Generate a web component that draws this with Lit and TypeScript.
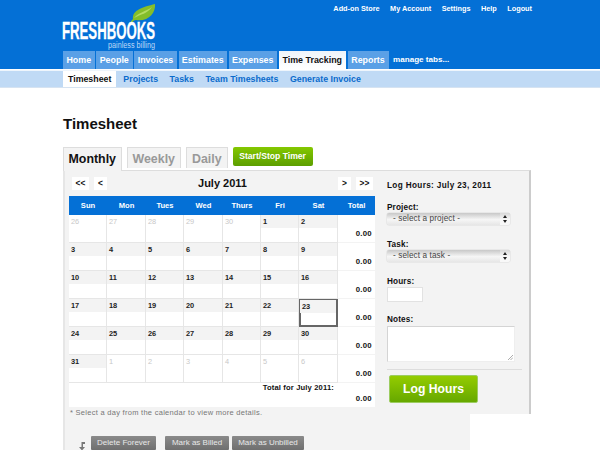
import { LitElement, html, css, svg } from "lit";
import { customElement } from "lit/decorators.js";

const cols = ["Sun", "Mon", "Tues", "Wed", "Thurs", "Fri", "Sat"];
const navTabs: [string, number, boolean][] = [
  ["Home", 31.5, false],
  ["People", 36.5, false],
  ["Invoices", 43, false],
  ["Estimates", 48.5, false],
  ["Expenses", 48.5, false],
  ["Time Tracking", 67.5, true],
  ["Reports", 41, false],
];
type Day = { n: number; cur: boolean; sel?: boolean };
const weeks: Day[][] = [];
{
  const all: Day[] = [];
  for (const n of [26, 27, 28, 29, 30]) all.push({ n, cur: false });
  for (let n = 1; n <= 31; n++) all.push({ n, cur: true, sel: n === 23 });
  for (const n of [1, 2, 3, 4, 5, 6]) all.push({ n, cur: false });
  for (let i = 0; i < 6; i++) weeks.push(all.slice(i * 7, i * 7 + 7));
}

@customElement("app-root")
export class AppRoot extends LitElement {
  static styles = css`
    :host { display: block; width: 600px; height: 450px; overflow: hidden; background: #fff;
      font-family: "Liberation Sans", Arial, sans-serif; color: #111; }
    .header { height: 69px; background: #0470d6; padding-left: 63px; display: flex; flex-direction: column; box-sizing: border-box; position: relative; }
    .top { display: flex; justify-content: space-between; height: 52px; width: 469px; }
    .logo { display: block; margin: 2px 0 0 -3px; width: 100px; height: 48px; overflow: visible; }
    .links { display: flex; gap: 10.5px; font-size: 7.3px; font-weight: 700; color: #fff; padding-top: 4px; line-height: 9px; }
    .tabs { display: flex; gap: 1.5px; height: 18px; align-items: stretch; font-size: 8.9px; font-weight: 700; color: #fff; }
    .tab { background: #5aa0e6; line-height: 18px; text-align: center; white-space: nowrap; }
    .tab.on { background: linear-gradient(#eef4fa, #fff); color: #111; }
    .tab.m { background: none; padding: 0 0 0 3px; font-size: 8.1px; }
    .sub { margin-top: 1px; border-top: 1px solid #eef5fc; height: 16px; background: #c0daf5; padding-left: 63px; display: flex; font-size: 8.8px; font-weight: 700; color: #0a6bcc; border-bottom: 1px solid #d6e3f1; }
    .sub span { line-height: 16px; margin-right: 11.5px; }
    .sub .on { background: #fff; color: #111; padding: 0 5px; margin-right: 7px; }
    h1 { font-size: 15px; margin: 0; padding: 27px 0 0 63px; line-height: 18px; font-weight: 700; color: #111; }
    .ptabs { display: flex; margin: 14px 0 0 63px; height: 23px; gap: 5px; align-items: flex-start; position: relative; z-index: 1; }
    .pt { height: 21px; box-sizing: border-box; border: 1px solid #ddd; border-bottom: none; background: #f3f3f3; padding: 0 5px; font-size: 12.4px; font-weight: 700; color: #999; line-height: 22px; }
    .pt.on { height: 24px; color: #111; line-height: 22px; padding: 0 4.5px; }
    .timer { height: 19px; width: 80px; border-radius: 2px; background: linear-gradient(#84c800, #5c9e00); color: #fff; font-size: 8.6px; font-weight: 700; text-align: center; line-height: 18px; }
    .panel { margin-left: 63px; width: 468px; height: 244px; box-sizing: border-box; background: #f3f3f3; border-top: 1px solid #ddd; border-right: 2px solid #ccc; border-left: 2px solid #e6e6e6; display: flex; padding-left: 4px; }
    .left { width: 306px; }
    .nav { display: flex; align-items: center; height: 13px; margin-top: 6px; font-weight: 700; }
    .nb { background: #fff; height: 13px; font-size: 8.4px; line-height: 12px; text-align: center; color: #111; }
    .nb.w1 { width: 13px; } .nb.w2 { width: 17px; }
    .nav .title { flex: 1; text-align: center; font-size: 11px; line-height: 13px; }
    .nl { display: flex; gap: 5px; margin-left: 3px; width: 63px; }
    .nr { display: flex; gap: 5px; margin-right: 2px; width: 63px; justify-content: flex-end; }
    .cal { margin-top: 6px; display: grid; grid-template-columns: 38px 39px 38px 39px 38px 38px 39px 37px; background: #fff; }
    .hd { background: #0470d6; color: #fff; height: 19px; line-height: 19px; text-align: center; font-size: 7.6px; font-weight: 700; }
    .cell { height: 28px; box-sizing: border-box; border-right: 1px solid #e6e6e6; border-bottom: 1px solid #e6e6e6; font-size: 7.4px; font-weight: 700; position: relative; }
    .num { height: 13px; line-height: 14px; padding-left: 2px; background: #f3f3f3; color: #222; }
    .cell.old .num { background: #fff; color: #c8c8c8; font-weight: 400; padding-top: 1px; height: 12px; line-height: 12px; }
    .cell.sel { border: 2px solid #666; }
    .cell.sel .num { margin: -1px 0 0 -1px; }
    .tot { height: 28px; box-sizing: border-box; border-bottom: 1px solid #f3f3f3; text-align: right; padding: 14px 3px 0 0; font-size: 7.8px; font-weight: 700; letter-spacing: .3px; line-height: 10px; }
    .foot { grid-column: 1 / -1; height: 24px; display: flex; flex-direction: column; font-size: 7.6px; font-weight: 700; text-align: right; }
    .foot .a { padding: 0 41px 0 0; line-height: 10px; letter-spacing: .15px; }
    .foot .b { padding: 0 3px 0 0; line-height: 12px; font-size: 7.8px; letter-spacing: .3px; }
    .note { font-size: 7.5px; color: #777; padding: 1px 0 0 1px; letter-spacing: .28px; line-height: 10px; }
    .right { margin-left: 12px; width: 135px; font-weight: 700; font-size: 8.2px; letter-spacing: .15px; display: flex; flex-direction: column; align-items: flex-start; }
    .right .t { margin-top: 10px; height: 10px; line-height: 10px; font-size: 8.2px; letter-spacing: .35px; }
    .lb { line-height: 12px; height: 10px; }
    .lb.p { margin-top: 11px; } .lb.k { margin-top: 14px; } .lb.h { margin-top: 14px; } .lb.n { margin-top: 12px; }
    .sel-box { width: 123px; height: 12px; box-sizing: border-box; border-radius: 2px; background: linear-gradient(#c8c8c8, #f6f6f6 55%, #e6e6e6); box-shadow: 0 0 0 .5px #ddd; font-weight: 400; font-size: 8.2px; color: #444; padding: 0 0 0 6px; line-height: 12px; position: relative; margin-top: 1px; letter-spacing: .1px; }
    .sel-box svg { position: absolute; right: 0; top: 0; border-radius: 0 2px 2px 0; background: linear-gradient(#d8d8d8, #f8f8f8 55%); }
    .in { width: 36px; height: 15px; box-sizing: border-box; background: #fff; border: 1px solid #e2e2e2; margin-top: 1px; }
    .ta { width: 128px; height: 36px; box-sizing: border-box; background: #fff; border: 1px solid #d4d4d4; border-bottom-color: #eee; border-right-color: #eee; position: relative; margin-top: 2px; }
    .ta svg { position: absolute; right: 1px; bottom: 1px; }
    .hr { width: 135px; height: 1px; background: #ddd; margin-top: 7px; }
    .log { margin: 5px 0 0 2px; width: 89px; height: 28px; box-sizing: border-box; border-radius: 2px; border: 1px solid #9ccc60; background: linear-gradient(#94cc00, #66a800); color: #fff; font-size: 12.2px; line-height: 26px; text-align: center; font-weight: 700; letter-spacing: 0; }
    .bottom { margin-left: 63px; width: 407px; height: 40px; box-sizing: border-box; background: #f3f3f3; border-left: 2px solid #e6e6e6; display: flex; align-items: flex-start; padding: 22px 0 0 12px; }
    .arrow { width: 10px; height: 10px; margin: 5px 4px 0 0; display: block; }
    .bb { height: 14px; background: linear-gradient(#8a8a8a, #6f6f6f); color: #e8e8e8; font-size: 8px; text-align: center; line-height: 13px; border-radius: 1px; box-sizing: border-box; }
    .bb.d { width: 65px; } .bb.b1 { width: 64px; margin-left: 9px; } .bb.b2 { width: 72px; margin-left: 3px; }
  `;

  private logo() {
    return html`<svg class="logo" viewBox="60 2 100 48">
      ${svg`
      <path d="M130 23 C131 21 132 20 133 19 C132 10 143 7 155 4 C156 13 148 22 136 20 C134 20 133 21 132 23 Z" fill="#84bd2a"/>
      <path d="M134 18 C139 12 145 12 152 7 C147 14 141 14 134 18 Z" fill="#b5dc62"/>
      <text x="62" y="39" font-family="Liberation Sans" font-weight="700" font-size="23" fill="#fff" stroke="#fff" stroke-width=".3" textLength="93" lengthAdjust="spacingAndGlyphs">FRESHBOOKS</text>
      <text x="108" y="48" font-family="Liberation Sans" font-weight="400" font-size="8.4" fill="#bcd8f6" textLength="47" lengthAdjust="spacingAndGlyphs">painless billing</text>
      `}
    </svg>`;
  }

  render() {
    return html`
      <div class="header">
        <div class="top">
          ${this.logo()}
          <div class="links"><span>Add-on Store</span><span>My Account</span><span>Settings</span><span>Help</span><span>Logout</span></div>
        </div>
        <div class="tabs">
          ${navTabs.map(([t, w, on]) => html`<span class="tab ${on ? "on" : ""}" style="width:${w}px">${t}</span>`)}
          <span class="tab m">manage tabs...</span>
        </div>
      </div>
      <div class="sub"><span class="on">Timesheet</span><span>Projects</span><span>Tasks</span><span>Team Timesheets</span><span>Generate Invoice</span></div>
      <h1>Timesheet</h1>
      <div class="ptabs">
        <span class="pt on">Monthly</span><span class="pt">Weekly</span><span class="pt">Daily</span><span class="timer">Start/Stop Timer</span>
      </div>
      <div class="panel">
        <div class="left">
          <div class="nav">
            <div class="nl"><span class="nb w2">&lt;&lt;</span><span class="nb w1">&lt;</span></div>
            <div class="title">July 2011</div>
            <div class="nr"><span class="nb w1">&gt;</span><span class="nb w2">&gt;&gt;</span></div>
          </div>
          <div class="cal">
            ${cols.map((c) => html`<div class="hd">${c}</div>`)}<div class="hd">Total</div>
            ${weeks.map((w) => html`
              ${w.map((d) => html`<div class="cell ${d.cur ? "" : "old"} ${d.sel ? "sel" : ""}"><div class="num">${d.n}</div></div>`)}
              <div class="tot">0.00</div>`)}
            <div class="foot"><div class="a">Total for July 2011:</div><div class="b">0.00</div></div>
          </div>
          <div class="note">* Select a day from the calendar to view more details.</div>
        </div>
        <div class="right">
          <div class="t">Log Hours: July 23, 2011</div>
          <div class="lb p">Project:</div>
          <div class="sel-box">- select a project -${this.arrows()}</div>
          <div class="lb k">Task:</div>
          <div class="sel-box">- select a task -${this.arrows()}</div>
          <div class="lb h">Hours:</div>
          <div class="in"></div>
          <div class="lb n">Notes:</div>
          <div class="ta"><svg width="6" height="6" viewBox="0 0 6 6"><path d="M1 6L6 1M3.5 6L6 3.5" stroke="#888" stroke-width=".7"/></svg></div>
          <div class="hr"></div>
          <div class="log">Log Hours</div>
        </div>
      </div>
      <div class="bottom">
        <svg class="arrow" viewBox="0 0 10 10"><path d="M8 1H4.5V6H2L5 9.5L8 6H6V3H8Z" fill="#777"/></svg>
        <span class="bb d">Delete Forever</span>
        <span class="bb b1">Mark as Billed</span>
        <span class="bb b2">Mark as Unbilled</span>
      </div>
    `;
  }

  private arrows() {
    return html`<svg width="10" height="12" viewBox="0 0 10 12"><path d="M5 2L7 5H3ZM5 10L3 7H7Z" fill="#222"/></svg>`;
  }
}
